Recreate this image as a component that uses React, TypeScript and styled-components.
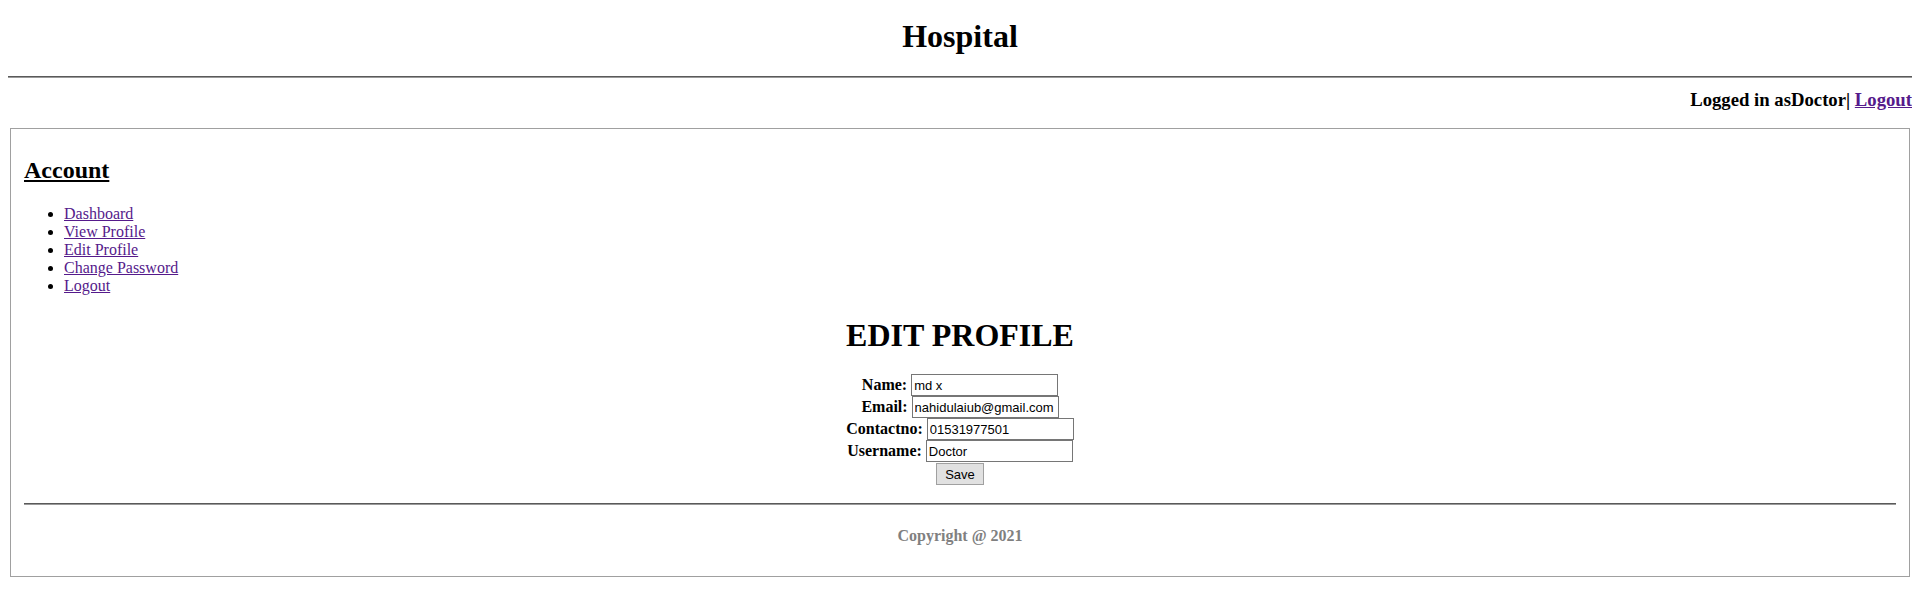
import React from "react";
import styled, { createGlobalStyle } from "styled-components";

const GlobalStyle = createGlobalStyle`
  body {
    margin: 8px;
    font-family: "Liberation Serif", "Times New Roman", serif;
    font-size: 16px;
    color: #000;
    background: #fff;
  }
`;

const Title = styled.h1`
  text-align: center;
  font-size: 32px;
  font-weight: bold;
  margin: 10px 0 21px;
`;

const Rule = styled.hr`
  border: none;
  border-top: 1px solid #5a5a5a;
  border-bottom: 1px solid #9a9a9a;
  margin: 0;
`;

const UserBar = styled.h3`
  text-align: right;
  font-size: 18.72px;
  font-weight: bold;
  margin: 11px 0 17px;
`;

const Link = styled.a`
  color: #551a8b;
  text-decoration: underline;
  cursor: pointer;
`;

const Panel = styled.div`
  margin: 0 2px;
  border: 1px solid #a0a0a0;
  padding: 8px 13px 0;
`;

const SectionTitle = styled.h2`
  font-size: 24px;
  font-weight: bold;
  text-decoration: underline;
  margin: 20px 0 21px;
`;

const NavList = styled.ul`
  margin: 0;
  padding-left: 40px;
  line-height: 18px;
`;

const PageTitle = styled.h1`
  text-align: center;
  font-size: 32px;
  font-weight: bold;
  margin: 22px 0 20px;
`;

const Form = styled.form`
  display: flex;
  flex-direction: column;
  align-items: center;
`;

const Row = styled.div`
  display: flex;
  align-items: center;
  gap: 4px;
  height: 22px;
`;

const Label = styled.label`
  font-weight: bold;
`;

const Field = styled.input`
  box-sizing: border-box;
  width: 147px;
  height: 22px;
  border: 1px solid #767676;
  padding: 1px 2px;
  font-family: "Liberation Sans", Arial, sans-serif;
  font-size: 13px;
  color: #000;
`;

const SaveButton = styled.button`
  box-sizing: border-box;
  width: 48px;
  height: 22px;
  margin-top: 1px;
  border: 1px solid #a0a0a0;
  background: #e1e1e1;
  font-family: "Liberation Sans", Arial, sans-serif;
  font-size: 13px;
  color: #000;
  padding: 0;
`;

const Footer = styled.footer`
  margin-top: 18px;
`;

const Copyright = styled.p`
  text-align: center;
  font-weight: bold;
  color: #808080;
  margin: 22px 0 0;
  padding-bottom: 31px;
`;

const navItems = ["Dashboard", "View Profile", "Edit Profile", "Change Password", "Logout"];

const fields = [
  { label: "Name:", value: "md x" },
  { label: "Email:", value: "nahidulaiub@gmail.com" },
  { label: "Contactno:", value: "01531977501" },
  { label: "Username:", value: "Doctor" },
];

export default function App() {
  return (
    <>
      <GlobalStyle />
      <Title>Hospital</Title>
      <Rule />
      <UserBar>
        Logged in asDoctor| <Link>Logout</Link>
      </UserBar>
      <Panel>
        <SectionTitle>Account</SectionTitle>
        <NavList>
          {navItems.map((item) => (
            <li key={item}>
              <Link>{item}</Link>
            </li>
          ))}
        </NavList>
        <PageTitle>EDIT PROFILE</PageTitle>
        <Form onSubmit={(e) => e.preventDefault()}>
          {fields.map((f) => (
            <Row key={f.label}>
              <Label>{f.label}</Label>
              <Field defaultValue={f.value} />
            </Row>
          ))}
          <SaveButton type="submit">Save</SaveButton>
        </Form>
        <Footer>
          <Rule />
          <Copyright>Copyright @ 2021</Copyright>
        </Footer>
      </Panel>
    </>
  );
}
